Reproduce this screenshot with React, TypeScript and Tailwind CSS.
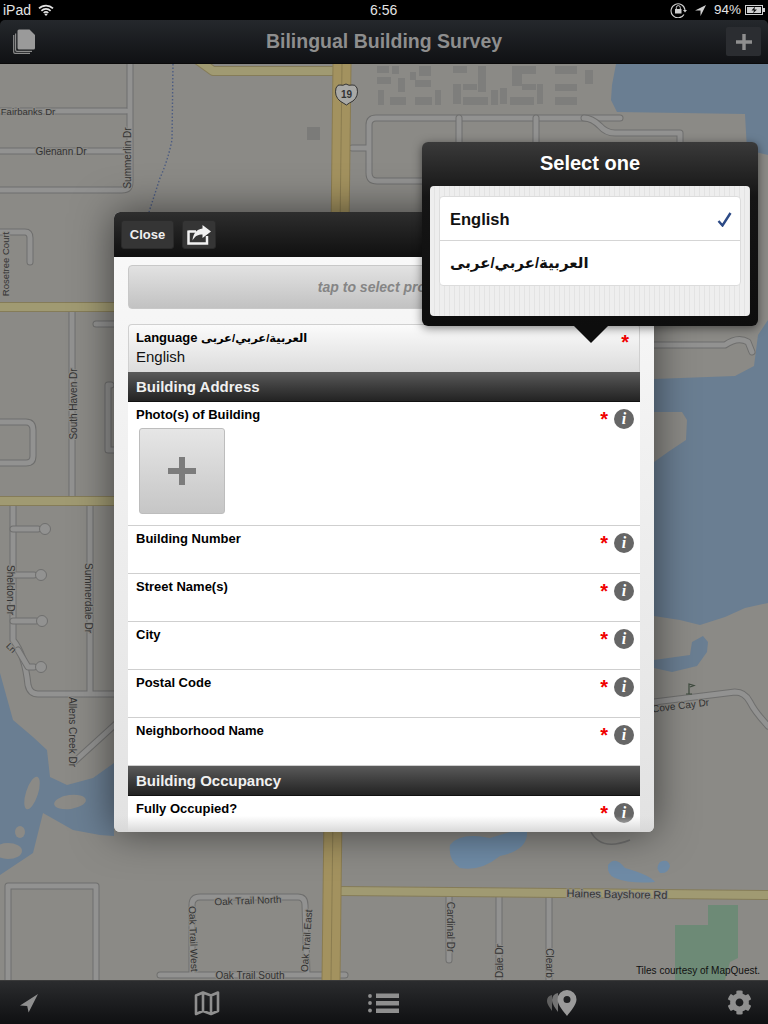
import type { ReactNode } from 'react';
import { FaCog } from 'react-icons/fa';

const font = "font-['Liberation_Sans','DejaVu_Sans',sans-serif]";

const ARABIC = 'العربية/عربي/عربى';

function Road({ d }: { d: string }) {
  return (
    <>
      <path d={d} fill="none" stroke="#6f6f6e" strokeWidth="7" strokeLinejoin="round" strokeLinecap="round" />
      <path d={d} fill="none" stroke="#929291" strokeWidth="5" strokeLinejoin="round" strokeLinecap="round" />
    </>
  );
}

function MajorRoad({ d, w = 10 }: { d: string; w?: number }) {
  return (
    <>
      <path d={d} fill="none" stroke="#857c58" strokeWidth={w} strokeLinejoin="round" />
      <path d={d} fill="none" stroke="#a09a72" strokeWidth={w - 2} strokeLinejoin="round" />
    </>
  );
}

function Label({ x, y, r = 0, s = 10, children }: { x: number; y: number; r?: number; s?: number; children: string }) {
  return (
    <text
      x={x}
      y={y}
      fontSize={s}
      fill="#333"
      textAnchor="middle"
      fontFamily="Liberation Sans, sans-serif"
      transform={r ? `rotate(${r} ${x} ${y})` : undefined}
      stroke="#8b8a86"
      strokeWidth="2"
      paintOrder="stroke"
    >
      {children}
    </text>
  );
}

const buildings: number[][] = [
  [377, 66, 12, 7], [392, 66, 7, 8], [377, 77, 14, 7], [378, 90, 6, 15], [390, 97, 16, 8], [398, 78, 7, 14], [410, 72, 6, 8],
  [415, 80, 16, 7], [419, 66, 12, 10], [415, 97, 17, 8], [435, 90, 6, 15], [453, 66, 14, 7], [453, 84, 8, 20], [463, 97, 25, 8],
  [463, 84, 14, 6], [478, 66, 8, 26], [491, 90, 7, 15], [500, 88, 7, 16], [510, 97, 24, 8], [512, 66, 10, 20], [522, 66, 14, 8],
  [522, 84, 14, 6], [537, 84, 6, 20], [555, 66, 22, 8], [555, 84, 22, 7], [555, 97, 22, 8], [585, 70, 8, 14],
];

function MapTiles() {
  return (
    <svg className="absolute inset-0 w-full h-full" viewBox="0 64 768 916" preserveAspectRatio="none">
      <rect x="0" y="64" width="768" height="916" fill="#8b8a86" />
      {/* water */}
      <path d="M616 64 L612 85 L611 100 L617 112 L745 114 L747 150 L768 155 L768 64 Z" fill="#6a7e92" />
      <path d="M768 320 L758 335 L754 366 L735 376 L654 379 L654 412 L682 412 L687 420 L686 440 L668 452 L654 462 L654 616 L680 620 L700 625 L725 617 L745 608 L768 603 Z" fill="#6a7e92" />
      <path d="M654 660 L690 655 L692 642 L703 636 L708 642 L707 652 L697 666 L672 672 L654 668 Z" fill="#6a7e92" />
      <path d="M0 673 L13 720 L33 737 L47 750 L50 777 L67 785 L93 778 L114 763 L114 836 L100 835 L73 830 L43 813 L33 853 L0 875 Z" fill="#6a7e92" />
      <ellipse cx="32" cy="793" rx="6" ry="17" transform="rotate(18 32 793)" fill="#8b8a86" />
      <ellipse cx="70" cy="802" rx="16" ry="7" transform="rotate(-8 70 802)" fill="#8b8a86" />
      <ellipse cx="20" cy="832" rx="5" ry="6" fill="#8b8a86" />
      <ellipse cx="8" cy="851" rx="14" ry="8" fill="#8b8a86" />
      <path d="M450 845 Q460 832 490 838 L510 832 L527 832 Q528 850 500 856 Q480 872 460 868 Q448 860 450 845 Z" fill="#6f8ba6" />
      <path d="M608 865 Q615 855 625 868 Q650 875 655 882 Q630 884 615 878 Q607 875 608 865 Z M660 862 Q668 858 670 866 Q668 874 660 873 Q655 868 660 862 Z" fill="#6f8ba6" />
      <path d="M708 905 L738 905 L738 958 L730 962 L725 980 L675 980 L675 925 L708 925 Z" fill="#6d8a76" />

      {/* buildings */}
      {buildings.map((b, i) => (
        <rect key={i} x={b[0]} y={b[1]} width={b[2]} height={b[3]} fill="#7e7e7c" />
      ))}
      <rect x="307" y="127" width="13" height="13" fill="#7b7b79" />

      {/* minor roads */}
      <Road d="M0 111 H126 M130 60 V182 Q130 190 122 190 H0 M0 151 H126" />
      <Road d="M352 148 H369 M620 118 H376 Q369 118 369 125 V173 Q369 181 377 181 H440" />
      <Road d="M459 118 V190 M536 118 V190 M584 118 Q592 118 600 126 Q606 133 615 133 H680 V150" />
      <Road d="M0 232 H25 Q30 232 30 238 V262" />
      <Road d="M72 312 V497 M96 324 H118" />
      <Road d="M0 422 H26 Q33 422 33 430 V456 Q33 463 26 463 H0 M111 385 H108 V450 H114" />
      <Road d="M90 505 V694 M13 505 V640 Q25 655 28 685 Q30 694 38 694 H118" />
      <Road d="M13 529 H38 M13 575 H34 M13 621 H36 M18 650 L28 667 H34" />
      <circle cx="45" cy="529" r="5.5" fill="#929291" stroke="#6f6f6e" />
      <circle cx="41" cy="575" r="5.5" fill="#929291" stroke="#6f6f6e" />
      <circle cx="42" cy="621" r="5.5" fill="#929291" stroke="#6f6f6e" />
      <circle cx="41" cy="667" r="5.5" fill="#929291" stroke="#6f6f6e" />
      <Road d="M74 762 L118 722" />
      <Road d="M8 980 V886 H96 V980" />
      <Road d="M654 345 H725 Q738 336 748 342 L752 352" />
      <Road d="M654 702 L735 692 Q745 692 750 702 Q755 712 768 726" />
      <Road d="M192 975 V905 Q192 897 200 897 H298 Q305 897 305 905 L307 975 M160 975 H345" />
      <Road d="M449 895 V960 M499 895 V980 M549 895 V980" />
      <path d="M590 830 Q600 852 630 840" fill="none" stroke="#6f6f6e" strokeWidth="1.5" />

      {/* main roads */}
      <MajorRoad d="M195 58 L213 71 L336 71" />
      <MajorRoad d="M0 307 H114" />
      <MajorRoad d="M0 501 H114" />
      <MajorRoad d="M340 891 L768 895" />
      <path d="M342 64 L331 980" fill="none" stroke="#8a7c50" strokeWidth="19" />
      <path d="M342 64 L331 980" fill="none" stroke="#a3925f" strokeWidth="17" />
      <path d="M342 64 L331 980" fill="none" stroke="#8a7c50" strokeWidth="1" />
      <path d="M173 64 L172 140 Q168 160 160 178 L149 212" fill="none" stroke="#4c5c82" strokeWidth="1.4" strokeDasharray="1.5 2" />

      {/* shield */}
      <path d="M336 88 Q338 84 340 85 Q343 86 346 84 Q349 86 352 85 Q355 84 357 88 Q359 96 353 101 Q349 103 346.5 105 Q343 103 340 101 Q334 96 336 88 Z" fill="#a9a9a6" stroke="#333" strokeWidth="1" />
      <text x="346.5" y="98" fontSize="10" fontWeight="700" textAnchor="middle" fill="#333" fontFamily="Liberation Sans, sans-serif">19</text>

      <path d="M689 694 V684 L694 685.5 L690 687 M686 694 H692" fill="none" stroke="#3d4a3d" strokeWidth="1.2" />

      <Label x={28} y={115} s={9.5}>Fairbanks Dr</Label>
      <Label x={61} y={155}>Glenann Dr</Label>
      <Label x={131} y={158} r={-90}>Summerlin Dr</Label>
      <Label x={9} y={264} r={-90} s={9.5}>Rosetree Court</Label>
      <Label x={77} y={404} r={-90}>South Haven Dr</Label>
      <Label x={7} y={590} r={90}>Sheldon Dr</Label>
      <Label x={85} y={598} r={90}>Summerdale Dr</Label>
      <Label x={69} y={732} r={90}>Allens Creek Dr</Label>
      <Label x={9} y={650} r={45} s={9}>Ln</Label>
      <Label x={681} y={709} r={-7}>Cove Cay Dr</Label>
      <Label x={248} y={904} r={-2}>Oak Trail North</Label>
      <Label x={190} y={939} r={88}>Oak Trail West</Label>
      <Label x={310} y={941} r={-86}>Oak Trail East</Label>
      <Label x={250} y={979}>Oak Trail South</Label>
      <Label x={447} y={927} r={90}>Cardinal Dr</Label>
      <Label x={503} y={961} r={-90}>Dale Dr</Label>
      <Label x={546} y={963} r={90}>Clearb</Label>
      <Label x={617} y={898} r={1} s={11}>Haines Bayshore Rd</Label>
    </svg>
  );
}

function PlusIcon({ size, color }: { size: number; color: string }) {
  return (
    <svg width={size} height={size} viewBox="0 0 28 28">
      <path d="M11 0h6v11h11v6H17v11h-6V17H0v-6h11z" fill={color} />
    </svg>
  );
}

function StatusBar() {
  return (
    <div className="h-5 shrink-0 bg-black relative flex items-center justify-between pl-[3px] pr-[3px] text-[14px] text-[#e4e4e4]">
      <div className="flex items-center gap-[7px]">
        <span>iPad</span>
        <svg width="16" height="12" viewBox="0 0 16 12">
          <path d="M1 4.4a10 10 0 0 1 14 0M3.4 6.8a6.6 6.6 0 0 1 9.2 0M5.7 9a3.3 3.3 0 0 1 4.6 0" fill="none" stroke="#e4e4e4" strokeWidth="1.7" />
          <path d="M8 12 6.4 10.3a2.3 2.3 0 0 1 3.2 0z" fill="#e4e4e4" />
        </svg>
      </div>
      <span className="absolute left-[370px] top-0 leading-5 font-medium">6:56</span>
      <div className="flex items-center">
        <svg width="17" height="16" viewBox="0 0 17 16" className="mr-[8px]">
          <path d="M14 12.5A7 7 0 1 1 15 8" fill="none" stroke="#d0d0d0" strokeWidth="1.1" />
          <path d="M13 8h4l-2 2.5z" fill="#d0d0d0" />
          <rect x="5" y="7" width="6.5" height="4.5" fill="#d0d0d0" />
          <path d="M6.3 7V5.6a2 2 0 0 1 4 0V7" fill="none" stroke="#d0d0d0" />
        </svg>
        <svg width="12" height="13" viewBox="0 0 12 13" className="mr-[7px]">
          <path d="M11 1 0 6.5h5.5V12z" fill="#d0d0d0" />
        </svg>
        <span className="mr-[4px] text-[13.5px]">94%</span>
        <svg width="20" height="10" viewBox="0 0 20 10">
          <rect x="0.5" y="0.5" width="17" height="9" fill="none" stroke="#d0d0d0" />
          <rect x="2" y="2" width="14" height="6" fill="#d0d0d0" />
          <rect x="18" y="3" width="2" height="4" fill="#d0d0d0" />
          <path d="M10 1.5 6.5 5.5H9L8 8.5l4-4H9.5z" fill="#111" />
        </svg>
      </div>
    </div>
  );
}

function NavBar() {
  return (
    <div className="h-11 shrink-0 bg-black">
      <div className="h-full rounded-t-[5px] bg-gradient-to-b from-[#25282c] to-[#101114] border-b border-[#0a0a0a] relative flex items-center justify-between pl-[13px] pr-[7px]">
        <svg width="23" height="25" viewBox="0 0 23 25">
          <path d="M0.7 6V23a1.3 1.3 0 0 0 1.3 1.3H17" fill="none" stroke="#8c8c8c" strokeWidth="1.2" />
          <path d="M2.6 4.5V21a1.3 1.3 0 0 0 1.3 1.3H19" fill="none" stroke="#8c8c8c" strokeWidth="1.2" />
          <path d="M4.5 2a1.5 1.5 0 0 1 1.5-1.5h10.5L22 6v13a1.5 1.5 0 0 1-1.5 1.5H6A1.5 1.5 0 0 1 4.5 19z" fill="#9a9a9a" />
        </svg>
        <div className="absolute inset-x-0 top-0 h-full flex items-center justify-center text-[19.5px] font-bold text-[#8e8e8e]">
          Bilingual Building Survey
        </div>
        <div className="w-[35px] h-[29px] rounded-[2px] bg-[#2b2d31] flex items-center justify-center relative">
          <PlusIcon size={16} color="#8f8f8f" />
        </div>
      </div>
    </div>
  );
}

function BottomBar() {
  return (
    <div className="h-11 shrink-0 bg-gradient-to-b from-[#2b2c2e] to-[#0f1012] border-t border-[#3a3a3a] flex items-center justify-between px-[17px]">
      <div className="w-6 flex justify-center">
        <svg width="20" height="20" viewBox="0 0 20 20">
          <path d="M19 1 1 12.5l7.2.6L9.6 19.5z" fill="#8f8f8f" />
        </svg>
      </div>
      <div className="w-6 flex justify-center">
        <svg width="26" height="26" viewBox="0 0 26 26" className="shrink-0">
          <path d="M2 5.5 9 2.5l8 3 7-3V21l-7 3-8-3-7 3z M9 2.5V21 M17 5.5V24" fill="none" stroke="#8f8f8f" strokeWidth="2.6" strokeLinejoin="round" />
        </svg>
      </div>
      <div className="w-6 flex justify-center">
        <svg width="32" height="20" viewBox="0 0 32 20" className="shrink-0">
          <circle cx="2" cy="3" r="1.9" fill="#8f8f8f" />
          <circle cx="2" cy="10" r="1.9" fill="#8f8f8f" />
          <circle cx="2" cy="17.5" r="1.9" fill="#8f8f8f" />
          <rect x="8" y="0.5" width="23" height="4.5" fill="#8f8f8f" />
          <rect x="8" y="8" width="23" height="4.5" fill="#8f8f8f" />
          <rect x="8" y="15.5" width="23" height="4.5" fill="#8f8f8f" />
        </svg>
      </div>
      <div className="w-6 flex justify-center">
        <svg width="32" height="26" viewBox="0 0 32 26" className="shrink-0">
          <path d="M6 5a6 6 0 0 0-5 6c0 3 3 7 5 10z" fill="#5f5f5f" />
          <path d="M12 3a7 7 0 0 0-6 7c0 4 4 9 6 12z" fill="#747474" />
          <path fillRule="evenodd" d="M21 0a9.5 9.5 0 0 0-9.5 9.5C11.500 15 18 22 21 26c3-4 9.500-11 9.500-16.500A9.500 9.500 0 0 0 21 0zm0 6a3.500 3.500 0 1 1 0 7 3.500 3.500 0 0 1 0-7z" fill="#9a9a9a" />
        </svg>
      </div>
      <div className="w-6 flex justify-center">
        <FaCog className="shrink-0 text-[#8f8f8f]" size={25} />
      </div>
    </div>
  );
}

function Star() {
  return <span className="block text-[#f00000] font-bold text-[20px] leading-[20px] h-[14px]">*</span>;
}

function InfoDot() {
  return (
    <span className="w-[20px] h-[20px] rounded-full bg-[#666] flex items-center justify-center text-white font-['Liberation_Serif',serif] italic font-bold text-[16px] leading-none">
      i
    </span>
  );
}

function FormRow({ label, h = 'h-[48px]', children }: { label: string; h?: string; children?: ReactNode }) {
  return (
    <div className={`${h} shrink-0 bg-white border-b border-[#cfcfcf] relative pl-2 pr-[6px] pt-[5px]`}>
      <div className="flex justify-between h-4">
        <span className="text-[13px] leading-[16px] font-bold text-black">{label}</span>
        <div className="flex items-start gap-[6px] mt-[2px]">
          <Star />
          <InfoDot />
        </div>
      </div>
      {children}
    </div>
  );
}

function SectionHeader({ title }: { title: string }) {
  return (
    <div className="h-[30px] shrink-0 bg-gradient-to-b from-[#5a5a5a] to-[#232323] border-b border-[#111] pl-2 pt-px flex items-center text-[15px] font-bold text-[#f0f0f0]">
      {title}
    </div>
  );
}

function ShareIcon() {
  return (
    <svg width="24" height="20" viewBox="0 0 24 20">
      <path d="M1.500 6.500H9 M1.500 5.500V18.500H20V11" fill="none" stroke="#f2f2f2" strokeWidth="2.500" />
      <path d="M15.500 0 24 6.500 15.500 13V9.500C11 9.500 8 11 5.500 15.500 6 9 9.500 4 15.500 3.500z" fill="#f2f2f2" />
    </svg>
  );
}

function SurveyModal() {
  return (
    <div className="absolute left-[114px] top-[148px] w-[540px] h-[620px] rounded-[6px] overflow-hidden flex flex-col bg-gradient-to-b from-[#fafafa] to-[#e2e2e2] shadow-[0_0_40px_rgba(0,0,0,0.55)]">
      <div className="h-[45px] shrink-0 bg-gradient-to-b from-[#2e2e2e] to-[#101010] flex items-center pl-[7px] gap-2">
        <div className="w-[53px] h-[29px] rounded-[3px] bg-[#353535] border border-[#2a2a2a] flex items-center justify-center text-[13px] font-bold text-[#efefef]">
          Close
        </div>
        <div className="w-[34px] h-[29px] rounded-[3px] bg-[#353535] border border-[#2a2a2a] flex items-center justify-center">
          <ShareIcon />
        </div>
      </div>
      <div className="flex-1 px-[14px] pt-2 flex flex-col overflow-hidden relative">
        <div className="h-[44px] shrink-0 rounded-[4px] border border-[#c8c8c8] bg-gradient-to-b from-[#e2e2e2] to-[#c2c2c2] flex items-center justify-center text-[14px] font-bold italic text-[#858585]">
          tap to select project
        </div>
        <div className="mt-[15px] h-[48px] shrink-0 rounded-t-[4px] border border-[#d0d0d0] border-b-0 bg-gradient-to-b from-[#fbfbfb] to-[#dcdcdc] pl-[7px] pr-[10px] pt-[5px] relative">
          <div className="flex justify-between h-4">
            <span className="text-[13px] leading-[16px] font-bold text-black">
              Language <span className="text-[11.5px]">{ARABIC}</span>
            </span>
            <div className="mt-[2px]">
              <Star />
            </div>
          </div>
          <div className="text-[15px] leading-[18px] mt-[2px] text-[#111]">English</div>
        </div>
        <SectionHeader title="Building Address" />
        <FormRow label="Photo(s) of Building" h="h-[124px]">
          <div className="mt-[5px] ml-[3px] w-[86px] h-[86px] rounded-[3px] border border-[#bdbdbd] bg-gradient-to-b from-[#e6e6e6] to-[#c6c6c6] flex items-center justify-center">
            <PlusIcon size={28} color="#7c7c7c" />
          </div>
        </FormRow>
        <FormRow label="Building Number" />
        <FormRow label="Street Name(s)" />
        <FormRow label="City" />
        <FormRow label="Postal Code" />
        <FormRow label="Neighborhood Name" />
        <SectionHeader title="Building Occupancy" />
        <FormRow label="Fully Occupied?" />
        <div className="absolute inset-x-0 bottom-0 h-[16px] bg-gradient-to-b from-transparent to-[#d8d8d8]" />
      </div>
    </div>
  );
}

function SelectPopover() {
  return (
    <div className="absolute left-[422px] top-[78px] w-[336px] h-[184px] rounded-[6px] bg-gradient-to-b from-[#3a3a3a] via-[#151515] via-30% to-[#0d0d0d] shadow-[0_2px_10px_rgba(0,0,0,0.5)] px-2 pb-[10px] flex flex-col">
      <div className="h-[44px] shrink-0 pb-[2px] flex items-center justify-center text-[20px] font-bold text-white">Select one</div>
      <div className="flex-1 rounded-[4px] px-[9px] pt-[10px] bg-[repeating-linear-gradient(90deg,#eeeeee_0px,#eeeeee_4px,#e3e3e3_4px,#e3e3e3_5px)]">
        <div className="rounded-[4px] bg-white border border-[#dcdcdc]">
          <div className="h-[44px] pt-[2px] border-b border-[#d5d5d5] flex items-center justify-between pl-[10px] pr-2">
            <span className="text-[16.5px] font-bold text-[#111]">English</span>
            <svg width="15" height="15" viewBox="0 0 15 15">
              <path d="M1.500 9 5.500 13.500 13.500 1" fill="none" stroke="#2c4a86" strokeWidth="2.400" />
            </svg>
          </div>
          <div className="h-[44px] flex items-center pl-[10px] text-[15px] font-bold text-[#111]">{ARABIC}</div>
        </div>
      </div>
      <div className="absolute left-[152px] top-[184px] w-0 h-0 border-x-[17px] border-x-transparent border-t-[17px] border-t-[#0d0d0d]" />
    </div>
  );
}

export default function App() {
  return (
    <div className={`w-[768px] h-[1024px] overflow-hidden flex flex-col bg-black ${font}`}>
      <StatusBar />
      <NavBar />
      <div className="flex-1 relative">
        <MapTiles />
        <span className="absolute right-[8px] bottom-[2px] text-[10px] text-[#111]">Tiles courtesy of MapQuest.</span>
        <SurveyModal />
        <SelectPopover />
      </div>
      <BottomBar />
    </div>
  );
}
